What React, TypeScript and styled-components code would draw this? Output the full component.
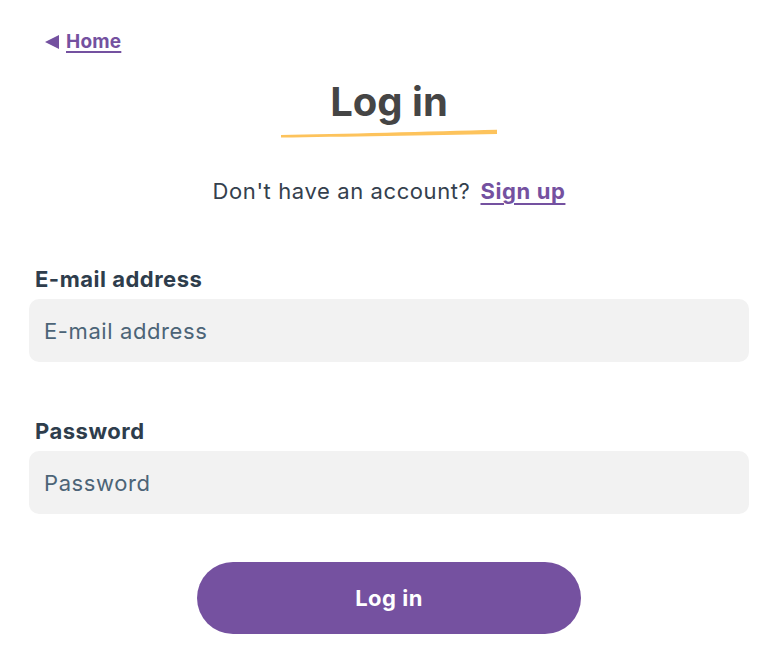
import React from "react";
import styled, { createGlobalStyle } from "styled-components";

const Global = createGlobalStyle`
  html, body { margin: 0; padding: 0; background: #fff; }
  body { font-family: Inter, Lato, sans-serif; -webkit-font-smoothing: antialiased; }
  * { box-sizing: border-box; }
`;

const Page = styled.div`
  width: 779px;
  padding: 30px 30px 0 29px;
  display: flex;
  flex-direction: column;
`;

const BackLink = styled.a`
  display: inline-flex;
  align-items: center;
  gap: 7px;
  margin-left: 16px;
  color: #7451a0;
  font-size: 19px;
  font-weight: 700;
  letter-spacing: 0.2px;
  text-decoration: none;
  align-self: flex-start;
  line-height: 24px;
  span { text-decoration: underline; text-underline-offset: 3px; text-decoration-thickness: 2px; }
`;

const Triangle = styled.i`
  width: 0;
  height: 0;
  border-top: 7px solid transparent;
  border-bottom: 7px solid transparent;
  border-right: 14px solid #7451a0;
`;

const TitleWrap = styled.div`
  display: flex;
  flex-direction: column;
  align-items: center;
  margin-top: 23px;
`;

const Title = styled.h1`
  margin: 0;
  font-size: 40px;
  font-weight: 700;
  color: #454545;
  line-height: 50px;
`;

const Swoosh = styled.svg`
  display: block;
  margin-top: 2px;
`;

const Prompt = styled.p`
  margin: 39px 0 0;
  text-align: center;
  font-size: 22px;
  letter-spacing: 0.6px;
  color: #34404d;
  line-height: 28px;
  a {
    margin-left: 10px;
    color: #7451a0;
    font-weight: 700;
    text-decoration: underline;
    text-underline-offset: 4px;
    text-decoration-thickness: 2px;
  }
`;

const Field = styled.div<{ $top: number }>`
  display: flex;
  flex-direction: column;
  margin-top: ${(p) => p.$top}px;
`;

const Label = styled.label`
  font-size: 22px;
  font-weight: 700;
  letter-spacing: 0.5px;
  color: #2e3d4c;
  padding-left: 6px;
  line-height: 28px;
  margin-bottom: 6px;
`;

const Input = styled.input`
  width: 720px;
  height: 63px;
  border: none;
  border-radius: 10px;
  background: #f2f2f2;
  padding: 0 15px;
  font-family: inherit;
  font-size: 22px;
  letter-spacing: 0.6px;
  color: #2e3d4c;
  outline: none;
  &::placeholder { color: #4c6477; opacity: 1; }
`;

const Submit = styled.button`
  align-self: center;
  margin-top: 48px;
  width: 384px;
  height: 72px;
  border: none;
  border-radius: 36px;
  background: #7551a0;
  color: #fff;
  font-family: inherit;
  font-size: 22px;
  letter-spacing: 0.5px;
  font-weight: 700;
  cursor: pointer;
`;

export default function App() {
  return (
    <>
      <Global />
      <Page>
        <BackLink href="#">
          <Triangle />
          <span>Home</span>
        </BackLink>
        <TitleWrap>
          <Title>Log in</Title>
          <Swoosh width="218" height="9" viewBox="0 0 218 9">
            <path d="M1 6 C 60 5.2 150 2.5 217 0.8 L 217 5 C 150 6.2 60 7.8 1 8.6 Z" fill="#fdc35c" />
          </Swoosh>
        </TitleWrap>
        <Prompt>
          Don't have an account?<a href="#">Sign up</a>
        </Prompt>
        <Field $top={60}>
          <Label>E-mail address</Label>
          <Input placeholder="E-mail address" />
        </Field>
        <Field $top={55}>
          <Label>Password</Label>
          <Input type="password" placeholder="Password" />
        </Field>
        <Submit>Log in</Submit>
      </Page>
    </>
  );
}
